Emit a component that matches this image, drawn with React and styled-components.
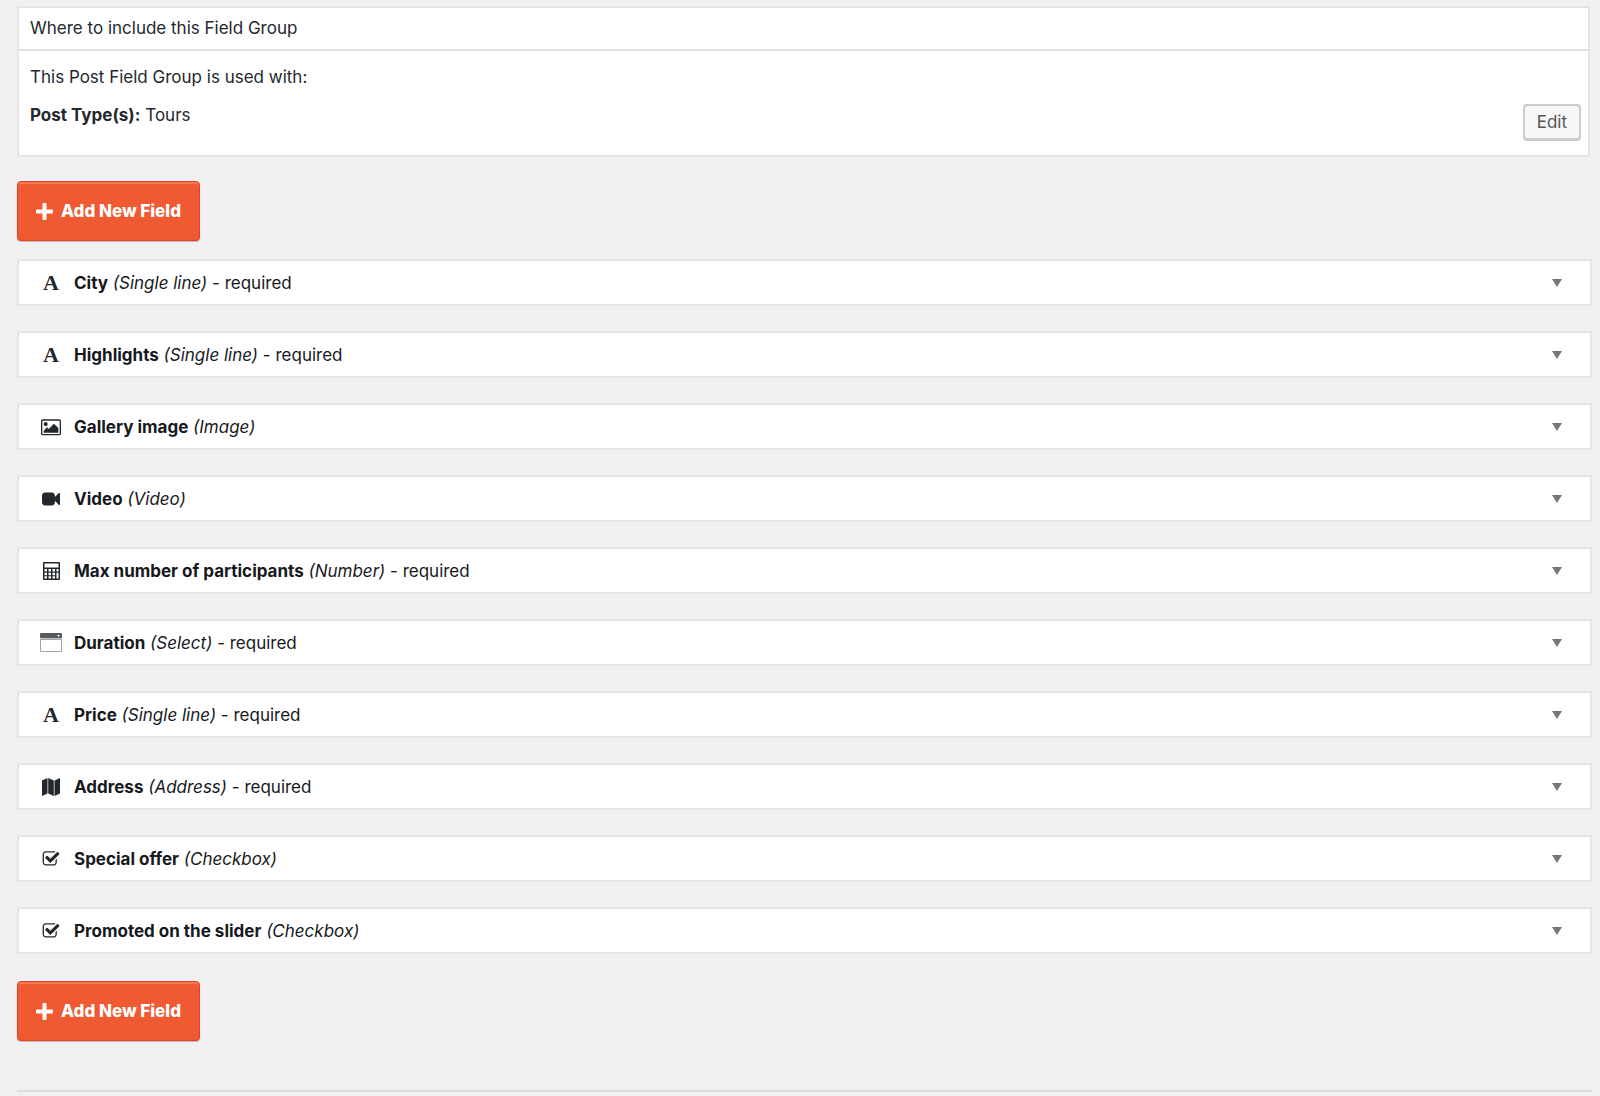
import React from 'react';
import styled, { createGlobalStyle } from 'styled-components';

const GlobalStyle = createGlobalStyle`
    * {
        box-sizing: border-box;
    }

    body {
        margin: 0;
        background: #f1f1f1;
        color: #23282d;
        font: 17px/24px Inter, "Liberation Sans", sans-serif;
    }
`;

const Page = styled.main`
    padding: 6px 8px 4px 17px;
`;

const Panel = styled.section`
    margin: 0 2px 24px 0;
    background: #fff;
    border: 2px solid #e4e4e4;
`;

const PanelTitle = styled.h2`
    margin: 0;
    padding: 8px 11px 9px;
    border-bottom: 2px solid #e0e0e0;
    font-size: 17px;
    font-weight: 400;
`;

const PanelBody = styled.div`
    display: flex;
    justify-content: space-between;
    align-items: flex-end;
    padding: 14px 7px 15px 11px;
`;

const Summary = styled.div`
    align-self: flex-start;

    p {
        margin: 0 0 14px;
    }

    p:last-child {
        margin-bottom: 13px;
    }
`;

const EditButton = styled.button`
    height: 36px;
    padding: 0 12px;
    border: 2px solid #ccc;
    border-radius: 4px;
    background: #f7f7f7;
    box-shadow: 0 1px 0 #ccc;
    color: #555;
    font: inherit;
    cursor: pointer;
`;

const AddButton = styled.button`
    display: flex;
    align-items: center;
    gap: 8px;
    height: 60px;
    padding: 0 18px;
    border: 1px solid #e8401c;
    border-radius: 4px;
    background: #f05a33;
    box-shadow: inset 0 2px 0 #f47a5a, 0 1px 1px #bbb;
    color: #fff;
    font: inherit;
    font-weight: 800;
    cursor: pointer;
`;

const FieldList = styled.ul`
    display: grid;
    gap: 25px;
    margin: 18px 0 27px;
    padding: 0;
    list-style: none;
`;

const FieldToggle = styled.button`
    display: flex;
    align-items: center;
    width: 100%;
    height: 47px;
    padding: 0 28px 0 20px;
    border: 2px solid #e5e5e5;
    background: #fff;
    color: #16191c;
    font: inherit;
    text-align: left;
    cursor: pointer;

    strong {
        font-weight: 700;
    }
`;

const IconSlot = styled.span`
    display: flex;
    align-items: center;
    justify-content: center;
    width: 24px;
    margin-right: 11px;
    color: #23282d;
`;

const LetterIcon = styled.span`
    font: bold 22px/22px "Liberation Serif", serif;
`;

const FieldLabel = styled.span`
    flex: 1;
`;

const Caret = styled.span`
    border: 5px solid transparent;
    border-top: 8px solid #72777c;
    border-bottom: 0;
`;

const Divider = styled.hr`
    margin: 49px 0 0;
    border: 0;
    border-top: 2px solid #ddd;
`;

const PlusIcon = () => (
    <svg width="17" height="17" viewBox="0 0 17 17" fill="currentColor" aria-hidden="true">
        <path d="M6.500 1q0-1 1-1h2q1 0 1 1v5.500H16q1 0 1 1v2q0 1-1 1h-5.500V16q0 1-1 1h-2q-1 0-1-1v-5.500H1q-1 0-1-1v-2q0-1 1-1h5.500z" />
    </svg>
);

const ImageIcon = () => (
    <svg width="20" height="18" viewBox="-64 0 1920 1728" fill="currentColor" aria-hidden="true">
        <path d="M576 576q0 80-56 136t-136 56-136-56-56-136 56-136 136-56 136 56 56 136zm1024 384v448h-1408v-192l320-320 160 160 512-512zm96-704h-1600q-13 0-22.500 9.500t-9.500 22.500v1216q0 13 9.500 22.500t22.500 9.500h1600q13 0 22.500-9.500t9.500-22.500v-1216q0-13-9.500-22.500t-22.500-9.500zm160 32v1216q0 66-47 113t-113 47h-1600q-66 0-113-47t-47-113v-1216q0-66 47-113t113-47h1600q66 0 113 47t47 113z" />
    </svg>
);

const VideoIcon = () => (
    <svg width="18" height="18" viewBox="0 0 1792 1792" fill="currentColor" aria-hidden="true">
        <path d="M1792 352v1088q0 42-39 59-13 5-25 5-27 0-45-19l-403-403v166q0 119-84.500 203.500t-203.500 84.500h-704q-119 0-203.500-84.500t-84.500-203.500v-704q0-119 84.500-203.500t203.500-84.500h704q119 0 203.500 84.500t84.500 203.500v165l403-402q18-19 45-19 12 0 25 5 39 17 39 59z" />
    </svg>
);

const CalculatorIcon = () => (
    <svg width="17" height="18" viewBox="0 0 17 18" aria-hidden="true">
        <rect width="17" height="18" rx="1" fill="currentColor" />
        <path fill="#fff" d="M1.500 1.500h14v4h-14zM1.500 7h2.500v2.500H1.500zM5.500 7H8v2.500H5.500zM9.500 7H12v2.500H9.500zM13.500 7h2v2.500h-2zM1.500 10.700h2.500v2.500H1.500zM5.500 10.700H8v2.500H5.500zM9.500 10.700H12v2.500H9.500zM1.500 14.300h2.500v2.200H1.500zM5.500 14.300H8v2.200H5.500zM9.500 14.300H12v2.200H9.500zM13.500 10.700h2v5.800h-2z" />
    </svg>
);

const SelectIcon = () => (
    <svg width="22" height="19" viewBox="0 0 22 19" aria-hidden="true">
        <rect width="22" height="5" rx="1" fill="#555a5e" />
        <path fill="#fff" d="M17 2h3l-1.500 2z" />
        <path fill="#c4c6c7" d="M0 5h22v2H0z" />
        <path fill="none" stroke="#a2a5a7" d="M.5 6.500h21v12H.5z" />
    </svg>
);

const MapIcon = () => (
    <svg width="18" height="18" viewBox="0 0 18 18" fill="currentColor" aria-hidden="true">
        <path d="M0 2.500L5.500 0v15.500L0 18zM6.200 0l5.600 2.500V18l-5.600-2.500zM12.500 2.500L18 0v15.500L12.500 18z" />
    </svg>
);

const CheckIcon = () => (
    <svg width="18" height="18" viewBox="0 0 1792 1792" fill="currentColor" aria-hidden="true">
        <path d="M1472 930v318q0 119-84.500 203.500t-203.500 84.500h-832q-119 0-203.500-84.500t-84.500-203.500v-832q0-119 84.500-203.500t203.500-84.500h832q63 0 117 25 15 7 18 23 3 17-9 29l-49 49q-10 10-23 10-3 0-9-2-23-6-45-6h-832q-66 0-113 47t-47 113v832q0 66 47 113t113 47h832q66 0 113-47t47-113v-254q0-13 9-22l64-64q10-10 23-10 6 0 12 3 20 8 20 29zm231-489l-814 814q-24 24-57 24t-57-24l-430-430q-24-24-24-57t24-57l110-110q24-24 57-24t57 24l263 263 647-647q24-24 57-24t57 24l110 110q24 24 24 57t-24 57z" />
    </svg>
);

const TextIcon = () => <LetterIcon aria-hidden="true">A</LetterIcon>;

const fields = [
    { name: 'City', type: 'Single line', icon: TextIcon, required: true },
    { name: 'Highlights', type: 'Single line', icon: TextIcon, required: true },
    { name: 'Gallery image', type: 'Image', icon: ImageIcon },
    { name: 'Video', type: 'Video', icon: VideoIcon },
    { name: 'Max number of participants', type: 'Number', icon: CalculatorIcon, required: true },
    { name: 'Duration', type: 'Select', icon: SelectIcon, required: true },
    { name: 'Price', type: 'Single line', icon: TextIcon, required: true },
    { name: 'Address', type: 'Address', icon: MapIcon, required: true },
    { name: 'Special offer', type: 'Checkbox', icon: CheckIcon },
    { name: 'Promoted on the slider', type: 'Checkbox', icon: CheckIcon },
];

const AddField = () => (
    <AddButton type="button">
        <PlusIcon />
        Add New Field
    </AddButton>
);

const Field = ({ name, type, icon: Icon, required }) => (
    <li>
        <FieldToggle type="button">
            <IconSlot><Icon /></IconSlot>
            <FieldLabel>
                <strong>{name}</strong> <em>({type})</em>{required ? ' - required' : null}
            </FieldLabel>
            <Caret />
        </FieldToggle>
    </li>
);

const App = () => (
    <>
        <GlobalStyle />
        <Page>
            <Panel>
                <PanelTitle>Where to include this Field Group</PanelTitle>
                <PanelBody>
                    <Summary>
                        <p>This Post Field Group is used with:</p>
                        <p><strong>Post Type(s):</strong> Tours</p>
                    </Summary>
                    <EditButton type="button">Edit</EditButton>
                </PanelBody>
            </Panel>
            <AddField />
            <FieldList>
                {fields.map(field => <Field key={field.name} {...field} />)}
            </FieldList>
            <AddField />
            <Divider />
        </Page>
    </>
);

export default App;
